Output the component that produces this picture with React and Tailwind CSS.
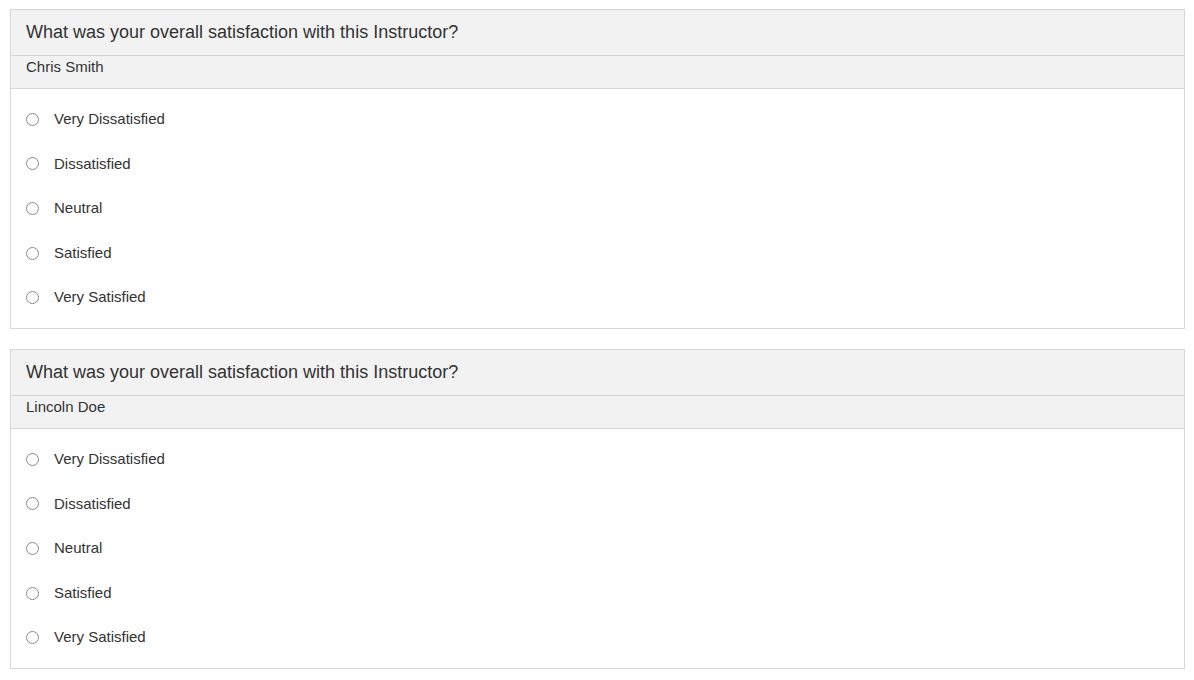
import React, { useState } from 'react'

const OPTIONS = ['Very Dissatisfied', 'Dissatisfied', 'Neutral', 'Satisfied', 'Very Satisfied']

const QuestionPanel = ({ name }) => {
  const [value, setValue] = useState(null)

  return (
    <div className="border border-[#d5d5d5] bg-white">
      <div className="h-[46px] flex items-center px-[15px] bg-[#f2f2f2] border-b border-[#d5d5d5] text-[18px] text-[#333]">
        What was your overall satisfaction with this Instructor?
      </div>
      <div className="h-[33px] px-[15px] pt-[1px] bg-[#f2f2f2] border-b border-[#d5d5d5] text-[15px] leading-[20px] text-[#333]">
        {name}
      </div>
      <div className="py-[8px]">
        {OPTIONS.map((opt) => (
          <label
            key={opt}
            className="h-[44.6px] flex items-center px-[15px] cursor-pointer text-[15px] text-[#333]"
            onClick={() => setValue(opt)}
          >
            <span className="w-[13px] h-[13px] rounded-full border border-[#8a8a8a] bg-white flex items-center justify-center shrink-0">
              {value === opt && <span className="w-[7px] h-[7px] rounded-full bg-[#333]" />}
            </span>
            <span className="ml-[15px]">{opt}</span>
          </label>
        ))}
      </div>
    </div>
  )
}

export default function App() {
  return (
    <div
      className="bg-white min-h-screen pt-[9px] pl-[10px] pr-[9px] flex flex-col gap-[20px]"
      style={{ fontFamily: '"Liberation Sans", Arial, sans-serif' }}
    >
      <QuestionPanel name="Chris Smith" />
      <QuestionPanel name="Lincoln Doe" />
    </div>
  )
}
